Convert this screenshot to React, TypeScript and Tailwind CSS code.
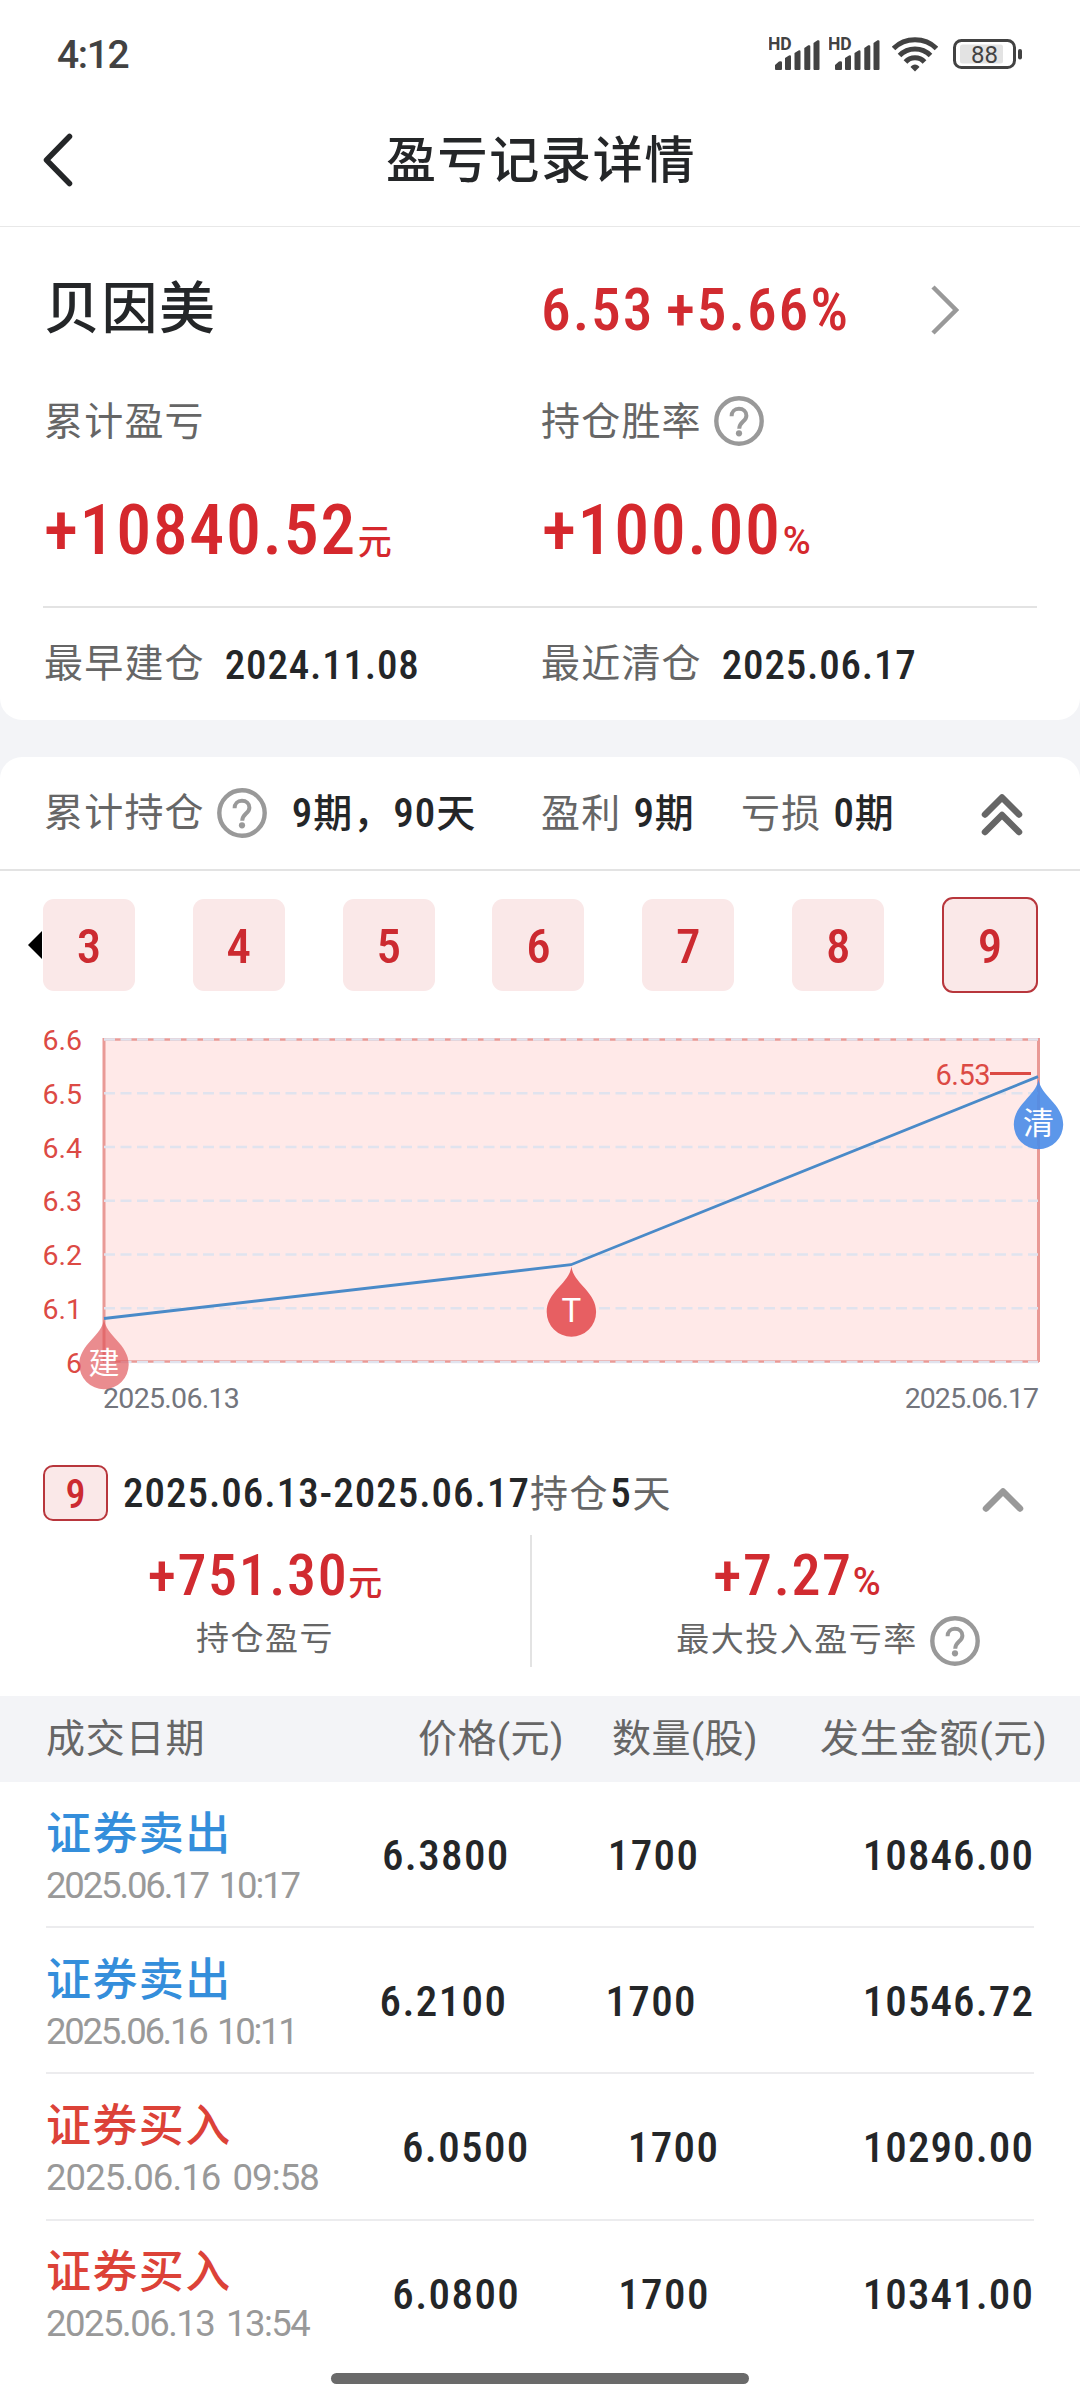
interface Trade {
  side: "sell" | "buy";
  time: string;
  timeClass: string;
  price: string;
  amount: string;
}

const PERIODS = [3, 4, 5, 6, 7, 8, 9];

const TRADES: Trade[] = [
  { side: "sell", time: "2025.06.17 10:17", timeClass: "tracking-[-2.15px]", price: "6.3800", amount: "10846.00" },
  { side: "sell", time: "2025.06.16 10:11", timeClass: "tracking-[-2.3px]", price: "6.2100", amount: "10546.72" },
  { side: "buy", time: "2025.06.16 09:58", timeClass: "tracking-[-0.9px]", price: "6.0500", amount: "10290.00" },
  { side: "buy", time: "2025.06.13 13:54", timeClass: "tracking-[-1.5px]", price: "6.0800", amount: "10341.00" },
];

// Side → label and color
const SIDES = {
  sell: { label: "证券卖出", color: "text-[#348edb]" },
  buy: { label: "证券买入", color: "text-[#dc4238]" },
};

function HelpIcon({ className = "" }: { className?: string }) {
  return (
    <svg viewBox="0 0 50 50" className={`h-[50px] w-[50px] shrink-0 ${className}`} fill="none" stroke="#999">
      <circle cx="25" cy="25" r="22.7" strokeWidth="4.4" />
      <path d="M17.6 20.2c0-4.5 3-7.4 7.3-7.4s7.5 2.8 7.5 6.9c0 5.9-7.2 6-7.2 13" strokeWidth="4" />
      <circle cx="25" cy="37.3" r="3.1" fill="#999" stroke="none" />
    </svg>
  );
}

function Signal() {
  return (
    <svg viewBox="0 -8 52 50" className="h-[50px] w-[52px]" fill="#424242">
      <text x="-1" y="13.2" fontSize="17.5" fontWeight="700" className="font-['Roboto',sans-serif]">HD</text>
      <path d="M6 32v-4l4-3.5q3-1 3 1v6.500q0 1-1 1h-5q-1 0-1-1zM16 32v-11l4-2.500q2-.6 2 1v12.500q0 1-1 1h-4q-1 0-1-1zM25.500 32v-16l4-2.500q2-.6 2 1v17.500q0 1-1 1h-4q-1 0-1-1zM35.300 32v-21l4-2.700q2-.6 2 1v22.700q0 1-1 1h-4q-1 0-1-1zM44.500 32v-26l4-2.700q2-.6 2 1v27.700q0 1-1 1h-4q-1 0-1-1z" />
    </svg>
  );
}

function StatusBar() {
  return (
    <div className="flex h-[108px] shrink-0 items-center pl-[57px] pr-[57px] text-[#424242]">
      <span className="pt-0.5 text-[39px] font-medium leading-none tracking-[-1.4px]">4:12</span>
      <div className="ml-auto flex items-center">
        <Signal />
        <span className="w-2" />
        <Signal />
        <svg viewBox="0 0 46 36" className="ml-[11px] h-[36px] w-[46px]" fill="none" stroke="#424242" strokeWidth="5">
          <path d="M1.500 12.500C13 .8 33 .8 44.500 12.500" />
          <path d="M7.500 19.500c8.500-8.700 22.500-8.700 31 0" />
          <path d="M13.500 26c5-5.600 14-5.600 19 0" />
          <path d="M23 35.500l-4.500-4.500c2-3.500 7-3.500 9 0z" fill="#424242" stroke="none" />
        </svg>
        <svg viewBox="0 0 70 32" className="ml-[15px] h-[32px] w-[70px]">
          <rect x="1.500" y="2.500" width="60" height="27" rx="7" fill="none" stroke="#424242" strokeWidth="3" />
          <rect x="7" y="6.500" width="43" height="19" rx="2.500" fill="#e3e3e3" />
          <rect x="65" y="11" width="4" height="10.500" rx="2" fill="#424242" />
          <text x="31.500" y="24.600" textAnchor="middle" fontSize="24" fill="#424242" className="font-['Roboto',sans-serif]">88</text>
        </svg>
      </div>
    </div>
  );
}

const PLOT = { left: 104, right: 1038, top: 46, bottom: 368.5 };
const DROP = "M0 0c2 17 24.700 25 24.700 45.500a24.700 24.700 0 0 1-49.400 0c0-20.500 22.700-28.500 24.700-45.500z";

function PriceChart() {
  const ticks = [6.6, 6.5, 6.4, 6.3, 6.2, 6.1, 6];
  const y = (v: number) => PLOT.bottom - ((v - 6) / 0.6) * (PLOT.bottom - PLOT.top);

  return (
    <svg viewBox="0 0 1080 458" className="h-[458px] w-[1080px] shrink-0 font-['Roboto','Noto_Sans_CJK_SC',sans-serif]">
      <rect x={PLOT.left} y={PLOT.top} width={PLOT.right - PLOT.left} height={PLOT.bottom - PLOT.top} fill="#ffe9e8" />
      <g stroke="#e99a96" strokeWidth="2.5">
        <path d="M103 46.500h936M103 368.500h936" />
        <path d="M104 45v324M1038.500 45v324" strokeWidth="3" />
      </g>

      {ticks.map((t) => (
        <g key={t}>
          <line x1={PLOT.left} x2={PLOT.right} y1={y(t) + 0.5} y2={y(t) + 0.5} stroke="#e0e3ee" strokeWidth="2.5" strokeDasharray="11 5.500" />
          <text x="82" y={y(t) + 11} textAnchor="end" fontSize="28.500" fill="#dc4a44">{t}</text>
        </g>
      ))}

      <polyline points={`104,${y(6.08)} 571,${y(6.18)} 1038,${y(6.53)}`} fill="none" stroke="#4a8ac8" strokeWidth="2.800" />
      <text x="990" y="92" textAnchor="end" fontSize="29" fill="#dc4a44" letterSpacing="-0.500">6.53</text>
      <path d="M990 80.500h41" stroke="#dc4a44" strokeWidth="2.800" />

      <text x="103" y="415" fontSize="28.500" fill="#73757d" letterSpacing="-0.700">2025.06.13</text>
      <text x="1038" y="415" textAnchor="end" fontSize="28.500" fill="#73757d" letterSpacing="-1">2025.06.17</text>

      {/* Open, T and close markers */}
      <g fill="#fff" textAnchor="middle" fontSize="31">
        <path d={DROP} transform="translate(104 326)" fill="#e0555a" fillOpacity="0.68" />
        <text x="104" y="381">建</text>
        <path d={DROP} transform="translate(571.400 273.500)" fill="#e75f62" />
        <text x="571.400" y="329" fontSize="33">T</text>
        <path d={DROP} transform="translate(1038.500 86)" fill="#4a8ce8" fillOpacity="0.9" />
        <text x="1038.500" y="141">清</text>
      </g>
    </svg>
  );
}

export default function App() {
  return (
    <div className="relative flex h-[2400px] w-[1080px] flex-col overflow-hidden bg-white font-['Roboto','Noto_Sans_CJK_SC',sans-serif] leading-none text-[#242628]">
      <StatusBar />

      <div className="grid h-[119px] shrink-0 grid-cols-[200px_1fr_200px] items-center border-b border-[#e8e8e8] pb-3.5">
        <svg viewBox="0 0 30 54" className="ml-[43px] h-[54px] w-[30px]" fill="none" stroke="#242628" strokeWidth="5.500" strokeLinecap="round" strokeLinejoin="round">
          <path d="M26.500 3.500L3.500 27l23 23.500" />
        </svg>
        <h1 className="pl-0.5 pt-0.5 text-center text-[50px] font-medium tracking-[1.7px]">盈亏记录详情</h1>
      </div>

      {/* Summary */}
      <div className="flex shrink-0 flex-col bg-[#f3f4f7]">
        <div className="rounded-b-[22px] bg-white px-[43px] pt-[27px]">
          <div className="grid h-[106px] grid-cols-[498px_1fr] items-center">
            <span className="pl-px pt-[4px] text-[56px] font-medium tracking-[1.5px]">贝因美</span>
            <div className="flex items-center text-[#d12b30]">
              <span className="w-[390px] pt-[7px] text-[59.5px] font-medium tracking-[1.9px] [word-spacing:-4px] font-stretch-[85%]">6.53 +5.66%</span>
              <svg viewBox="0 0 28 50" className="mt-1.5 h-[50px] w-[28px]" fill="none" stroke="#999" strokeWidth="4.500">
                <path d="M2 2l23 23L2 48" />
              </svg>
            </div>
          </div>
          <div className="grid h-[122px] grid-cols-[498px_1fr] items-center text-[39px] tracking-[1.2px] text-[#666]">
            <span className="pl-px pt-0.5">累计盈亏</span>
            <div className="flex items-center">
              <span className="pt-0.5">持仓胜率</span>
              <HelpIcon className="ml-[12px]" />
            </div>
          </div>
          <div className="mb-8 grid h-[92px] grid-cols-[498px_1fr] items-center pt-[3px] text-[70px] font-medium tracking-[1.6px] text-[#d5282d] font-stretch-[85%]">
            <div className="whitespace-nowrap pl-px">+10840.52<span className="ml-px text-[34px] tracking-normal">元</span></div>
            <div className="whitespace-nowrap pl-px">+100.00<span className="ml-px text-[38px] tracking-normal font-stretch-normal">%</span></div>
          </div>
          <div className="grid h-[114px] grid-cols-[498px_1fr] items-center border-t-2 border-[#e3e3e3] pt-px text-[39px] tracking-[1.2px] text-[#666]">
            <div className="flex items-center pl-px">
              最早建仓
              <span className="ml-[20px] pt-px text-[41px] font-medium tracking-[0.8px] text-[#242628] font-stretch-[85%]">2024.11.08</span>
            </div>
            <div className="flex items-center">
              最近清仓
              <span className="ml-[20px] pt-px text-[41px] font-medium tracking-[0.8px] text-[#242628] font-stretch-[85%]">2025.06.17</span>
            </div>
          </div>
        </div>

        {/* Holding totals */}
        <div className="mt-[37px] flex h-[114px] items-center rounded-t-[22px] border-b-2 border-[#e3e3e3] bg-white pl-[44px] text-[39px] tracking-[1.2px] text-[#666]">
          <div className="flex w-[497px] items-center">
            累计持仓
            <HelpIcon className="ml-[12px]" />
            <span className="ml-[25px] font-medium tracking-[1px] text-[#242628] font-stretch-[85%]">
              <span className="text-[41px]">9</span>期，<span className="text-[41px]">90</span>天
            </span>
          </div>
          <span className="w-[200px]">
            盈利<span className="ml-[12px] font-medium tracking-[0.8px] text-[#242628] font-stretch-[85%]"><span className="text-[41px]">9</span>期</span>
          </span>
          <span className="w-[240px]">
            亏损<span className="ml-[12px] font-medium tracking-[0.8px] text-[#242628] font-stretch-[85%]"><span className="text-[41px]">0</span>期</span>
          </span>
          <svg viewBox="0 0 42 44" className="mt-0.5 h-[44px] w-[42px]" fill="none" stroke="#666" strokeWidth="6.500" strokeLinecap="round" strokeLinejoin="round">
            <path d="M4 22.500L21 5.500l17 17M4 40l17-17 17 17" />
          </svg>
        </div>
      </div>

      {/* Period picker */}
      <div className="relative mt-[26px] flex h-24 shrink-0 items-center justify-between pl-[43px] pr-[42px] text-[49px] font-medium text-[#cc2a30] font-stretch-[85%]">
        <svg viewBox="0 0 14 28" className="absolute left-[28px] top-[34px] h-[28px] w-[14px]">
          <path d="M14 0v28L0 14z" />
        </svg>
        {PERIODS.map((p) => (
          <div
            key={p}
            className={`flex items-center justify-center rounded-[11px] bg-[#fae8e8] pt-[3px] ${
              p === 9 ? "h-24 w-24 border-2 border-[#b8363c]" : "h-[92px] w-[92px]"
            }`}
          >
            {p}
          </div>
        ))}
      </div>

      <PriceChart />

      {/* Selected period */}
      <div className="flex h-[84px] shrink-0 items-center pl-[43px] text-[38px] text-[#666]">
        <span className="flex h-[56px] w-[65px] items-center justify-center rounded-[10px] border-2 border-[#b8363c] bg-[#fae8e8] pt-[3px] text-[40px] font-medium text-[#cc2a30] font-stretch-[85%]">9</span>
        <div className="ml-[15px] w-[859px] whitespace-nowrap tracking-[1.7px]">
          <span className="text-[41px] font-medium tracking-[0.98px] text-[#242628] font-stretch-[85%]">2025.06.13-2025.06.17</span>
          持仓
          <span className="ml-px text-[41px] font-medium text-[#242628] font-stretch-[85%]">5</span>
          天
        </div>
        <svg viewBox="0 0 42 26" className="mt-[14px] h-[26px] w-[42px]" fill="none" stroke="#999" strokeWidth="6.500" strokeLinecap="round" strokeLinejoin="round">
          <path d="M4 21.500L21 4.500l17 17" />
        </svg>
      </div>
      <div className="flex h-[161px] shrink-0 text-[33px] tracking-[1.5px] text-[#666]">
        <div className="flex w-[530px] flex-col items-center pt-[11px]">
          <div className="text-[58px] font-medium tracking-[1.6px] text-[#d12b30] font-stretch-[85%]">+751.30<span className="text-[34px] tracking-normal">元</span></div>
          <span className="mt-[18px]">持仓盈亏</span>
        </div>
        <div className="h-[132px] w-[2px] bg-[#e3e3e3]" />
        <div className="flex flex-1 flex-col items-center pt-[11px]">
          <div className="mr-[18px] text-[58px] font-medium tracking-[1.6px] text-[#d12b30] font-stretch-[85%]">+7.27<span className="text-[38px] tracking-normal font-stretch-normal">%</span></div>
          <div className="ml-[44px] mt-[12px] flex items-center">
            <span className="pb-[3px]">最大投入盈亏率</span>
            <HelpIcon className="ml-[12px]" />
          </div>
        </div>
      </div>

      {/* Trades */}
      <div className="flex h-[86px] shrink-0 items-center bg-[#f3f4f7] text-[39px] tracking-[0.8px] text-[#666]">
        <span className="ml-[46px] w-[372px]">成交日期</span>
        <span className="w-[194px] tracking-[0.4px]">价格(元)</span>
        <span className="w-[208px] tracking-[0.4px]">数量(股)</span>
        <span>发生金额(元)</span>
      </div>
      <div className="shrink-0 px-[46px]">
        {TRADES.map((t) => (
          <div
            key={t.time}
            className="flex h-[146.2px] items-center border-b-2 border-[#ececee] text-[43px] font-medium last:border-transparent"
          >
            <div className="whitespace-nowrap pt-[8px]">
              <div className={`text-[45px] tracking-[1.4px] ${SIDES[t.side].color}`}>{SIDES[t.side].label}</div>
              <div className={`mt-[11px] text-[36.5px] font-normal text-[#999] [word-spacing:4px] ${t.timeClass}`}>{t.time}</div>
            </div>
            <span className="ml-[83px] pt-[3px] tracking-[1.4px] font-stretch-[85%]">{t.price}</span>
            <span className="ml-[98px] pt-[3px] tracking-[1.4px] font-stretch-[85%]">1700</span>
            <span className="ml-auto pt-[3px] tracking-[1.1px] font-stretch-[85%]">{t.amount}</span>
          </div>
        ))}
      </div>

      <div className="mx-auto mb-4 mt-auto h-[11px] w-[418px] shrink-0 rounded-full bg-[#6a6a6a]" />
    </div>
  );
}
